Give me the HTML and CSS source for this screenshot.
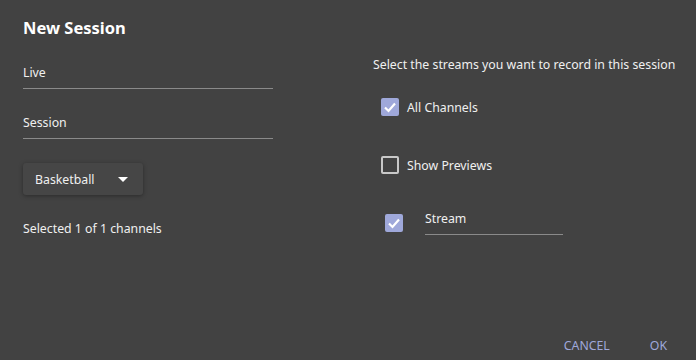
FILE: index.html
```html
<!DOCTYPE html>
<html>

<head>
    <link rel="stylesheet" href="styles.css">
</head>

<body>

    <div class="dialog">
        <div class="columns">
            <div class="left">
                <h2>New Session</h2>
                <div class="field first">Live</div>
                <div class="field">Session</div>
                <div class="dropdown">
                    <span>Basketball</span>
                    <span class="caret"></span>
                </div>
                <div class="selected">Selected 1 of 1 channels</div>
            </div>

            <div class="right">
                <div class="hint">Select the streams you want to record in this session</div>
                <div class="check-row">
                    <span class="box checked">
                        <svg viewBox="0 0 18 18" width="18" height="18">
                            <polyline points="4,9.5 7.5,13 14,5.5" fill="none" stroke="#fff" stroke-width="2.2" />
                        </svg>
                    </span>
                    <span>All Channels</span>
                </div>
                <div class="check-row">
                    <span class="box"></span>
                    <span>Show Previews</span>
                </div>
                <div class="stream-row">
                    <span class="box checked">
                        <svg viewBox="0 0 18 18" width="18" height="18">
                            <polyline points="4,9.5 7.5,13 14,5.5" fill="none" stroke="#fff" stroke-width="2.2" />
                        </svg>
                    </span>
                    <div class="field stream">Stream</div>
                </div>
            </div>
        </div>

        <div class="actions">
            <button class="cancel">Cancel</button>
            <button class="ok">OK</button>
        </div>
    </div>

</body>

</html>
```

FILE: styles.css
```css
body {
    margin: 0;
    background-color: #424242;
    color: #f0f0f0;
    font-family: "Noto Sans", "DejaVu Sans", sans-serif;
    font-size: 12.3px;
}

.dialog {
    height: 360px;
    box-sizing: border-box;
    padding: 0 23px;
    display: flex;
    flex-direction: column;
}

.columns {
    display: flex;
    gap: 100px;
}

.left {
    flex: 0 0 250px;
    display: flex;
    flex-direction: column;
}

h2 {
    margin: 16px 0 0;
    font-size: 16.5px;
    line-height: 24px;
    font-weight: bold;
    color: #fff;
}

.field {
    line-height: 20px;
    padding-bottom: 5px;
    border-bottom: 1px solid #8a8a8a;
    margin-top: 24px;
}

.field.first {
    margin-top: 23px;
}

.dropdown {
    margin-top: 24px;
    width: 120px;
    height: 32px;
    box-sizing: border-box;
    padding: 0 15px 0 12px;
    display: flex;
    align-items: center;
    justify-content: space-between;
    background-color: #464646;
    border-radius: 3px;
    box-shadow: 0 1px 4px rgba(0, 0, 0, 0.35);
}

.caret {
    width: 0;
    height: 0;
    border-left: 5px solid transparent;
    border-right: 5px solid transparent;
    border-top: 5px solid #fff;
}

.selected {
    margin-top: 24px;
    line-height: 20px;
}

.right {
    display: flex;
    flex-direction: column;
    white-space: nowrap;
}

.hint {
    margin-top: 55px;
    line-height: 20px;
}

.check-row {
    height: 40px;
    display: flex;
    align-items: center;
    margin-top: 12px;
    padding-left: 8px;
}

.check-row + .check-row {
    margin-top: 18px;
}

.box {
    width: 18px;
    height: 18px;
    box-sizing: border-box;
    border: 2px solid #c8c8c8;
    border-radius: 2px;
    margin-right: 8px;
    display: flex;
}

.box.checked {
    border: none;
    background-color: #9fa8da;
}

.stream-row {
    display: flex;
    align-items: flex-start;
    padding-left: 12px;
    margin-top: 6px;
}

.stream-row .box {
    margin-top: 23px;
    margin-right: 0;
}

.field.stream {
    width: 138px;
    margin-left: 22px;
    margin-top: 18px;
}

.actions {
    margin-top: auto;
    margin-bottom: 4px;
    display: flex;
    justify-content: flex-end;
    gap: 24px;
    margin-right: -2px;
}

button {
    background: none;
    border: none;
    color: #9fa8da;
    font-family: inherit;
    font-size: 12.3px;
    text-transform: uppercase;
    padding: 0 8px;
    height: 20px;
    line-height: 20px;
    cursor: pointer;
}
```
